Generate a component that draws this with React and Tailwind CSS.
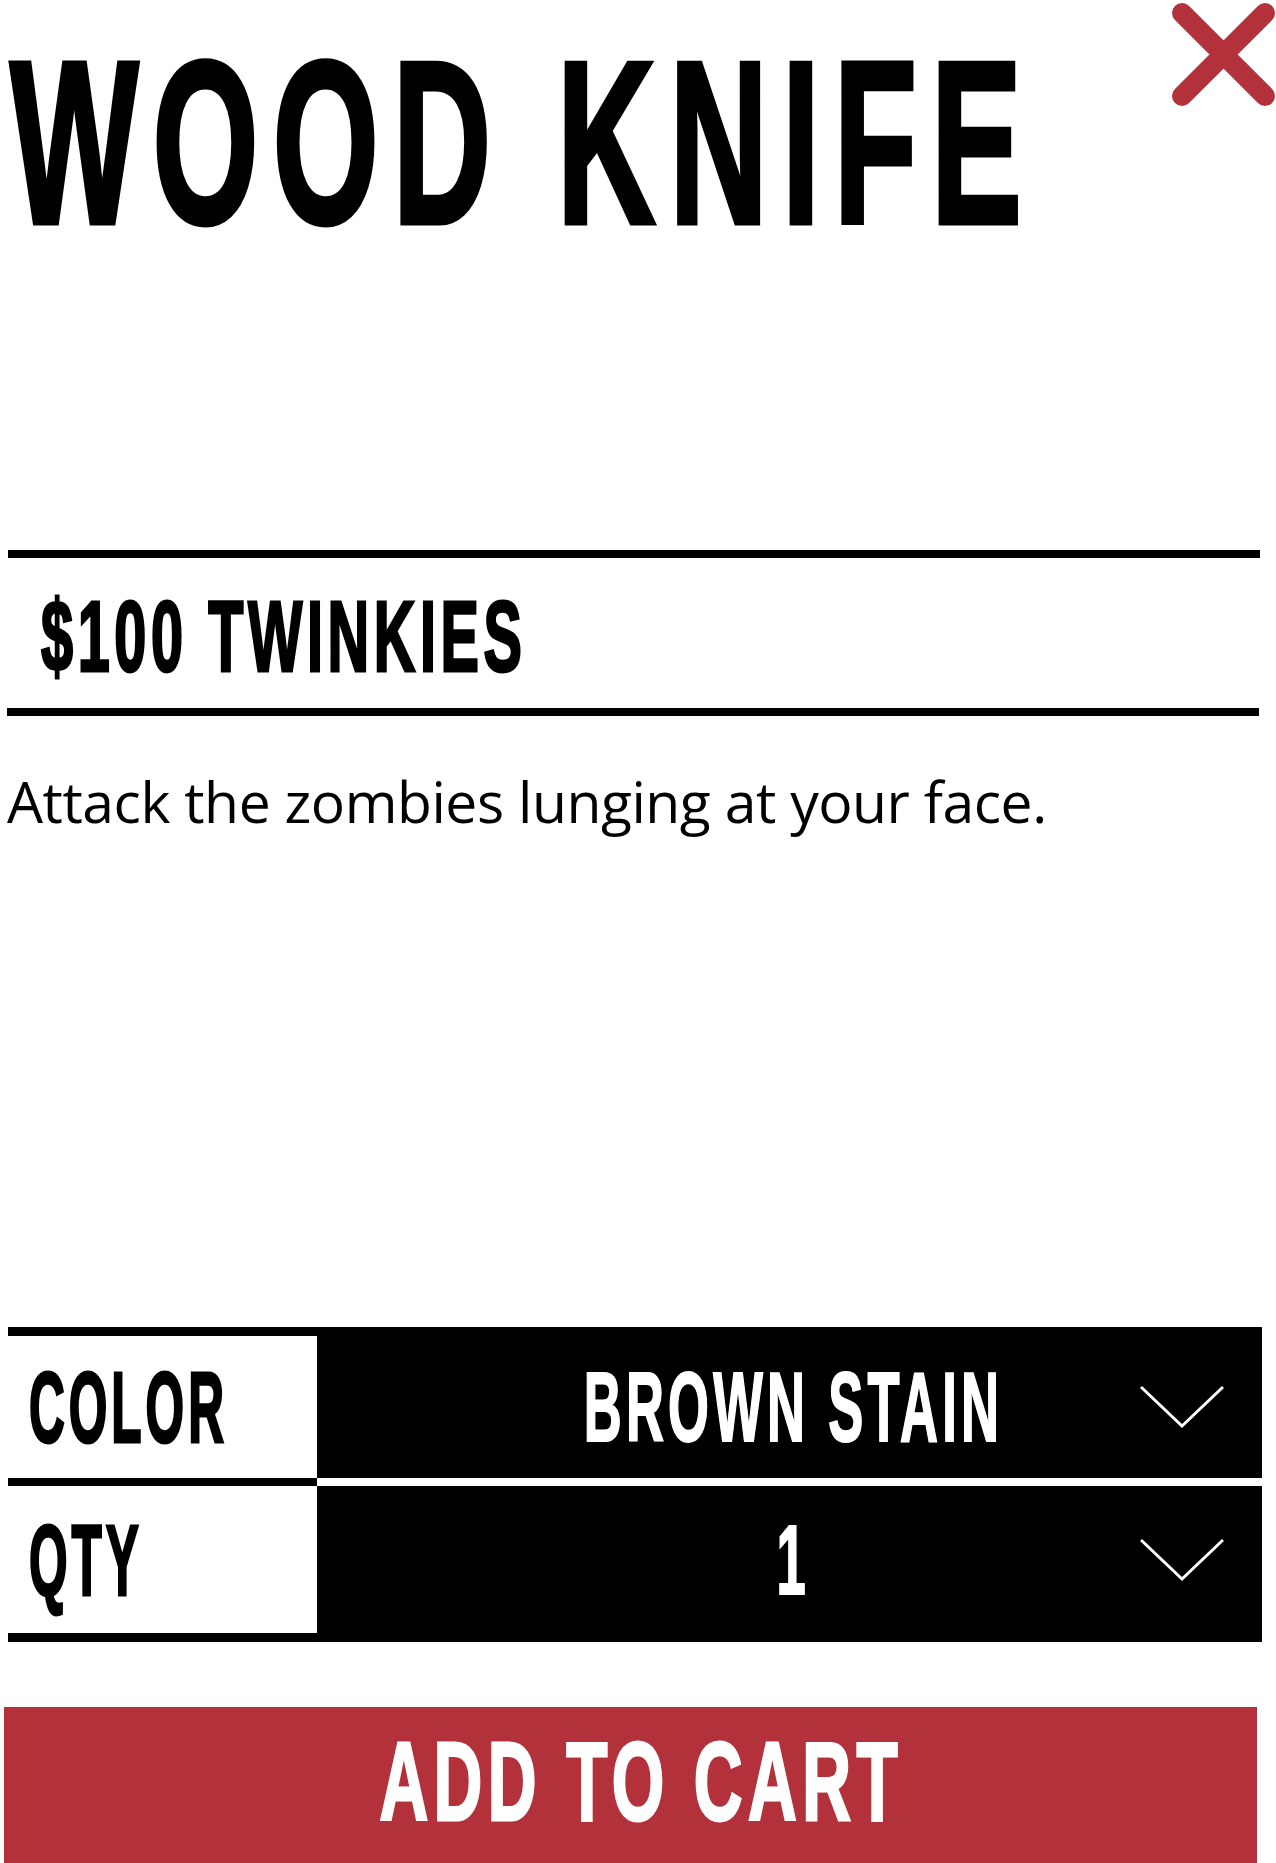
// ProductDetail.jsx
// Single product panel: title, price, blurb, option selects and add-to-cart.

const display = "font-['Liberation_Sans',Arial,sans-serif] font-bold uppercase leading-none whitespace-nowrap";

function Chevron() {
  return (
    <svg width="84" height="44" viewBox="0 0 84 44" className="absolute right-[38px] top-1/2 -translate-y-1/2">
      <polyline points="1,2 42,41 83,2" fill="none" stroke="white" strokeWidth="3" />
    </svg>
  );
}

export default function App() {
  const options = [
    { label: "Color", value: "Brown Stain", height: "h-[142px]" },
    { label: "Qty", value: "1", height: "h-[147px]" },
  ];

  return (
    <div className="relative w-[1276px] overflow-hidden bg-white text-black">
      {/* close button */}
      <button className="absolute left-[1160px] top-0">
        <svg width="116" height="110" viewBox="0 0 116 110">
          <line x1="22" y1="13" x2="105" y2="96" stroke="#b3313a" strokeWidth="20" strokeLinecap="round" />
          <line x1="105" y1="13" x2="22" y2="96" stroke="#b3313a" strokeWidth="20" strokeLinecap="round" />
        </svg>
      </button>

      <h1 className={`${display} ml-[10px] mt-[27px] h-[232px] text-[232px] tracking-[24px] [-webkit-text-stroke:5px_currentColor]`}>
        <span className="inline-block origin-left scale-x-[0.587]">Wood Knife</span>
      </h1>

      <div className="ml-2 mt-[291px] h-2 w-[1252px] bg-black" />

      <div className={`${display} ml-[41px] mt-[28px] h-[100px] text-[100px] tracking-[8px] [-webkit-text-stroke:3px_currentColor]`}>
        <span className="inline-block origin-left scale-x-[0.576]">$100 Twinkies</span>
      </div>

      <div className="ml-[7px] mt-[22px] h-2 w-[1252px] bg-black" />

      <p className="ml-[7px] mt-[57px] h-[57px] whitespace-nowrap font-['Open_Sans',sans-serif] text-[57px] leading-none tracking-[-0.45px]">
        Attack the zombies lunging at your face.
      </p>

      {/* options */}
      <div className="ml-2 mt-[497px] w-[1254px] border-y-[9px] border-black">
        {options.map((opt, i) => (
          <div key={opt.label}>
            {i > 0 && (
              <div className="flex h-2">
                <div className="w-[309px] bg-black" />
                <div className="flex-1 bg-white" />
              </div>
            )}
            <div className={`flex ${opt.height}`}>
              <div className={`${display} flex w-[309px] items-center pl-[21px] text-[100px] tracking-[8px] [-webkit-text-stroke:3px_currentColor]`}>
                <span className="inline-block origin-left scale-x-[0.496]">{opt.label}</span>
              </div>
              <div className={`${display} relative flex flex-1 items-center justify-center bg-black pl-2 text-[98px] tracking-[8px] text-white [-webkit-text-stroke:2px_currentColor]`}>
                <span className="inline-block scale-x-[0.536]">{opt.value}</span>
                <Chevron />
              </div>
            </div>
          </div>
        ))}
      </div>

      <button className={`${display} ml-1 mt-[65px] flex h-[156px] w-[1253px] justify-center bg-[#b3313a] pl-[22px] pt-[19px] text-[112px] tracking-[9px] text-white [-webkit-text-stroke:3px_currentColor]`}>
        <span className="inline-block scale-x-[0.603]">Add to Cart</span>
      </button>
    </div>
  );
}
